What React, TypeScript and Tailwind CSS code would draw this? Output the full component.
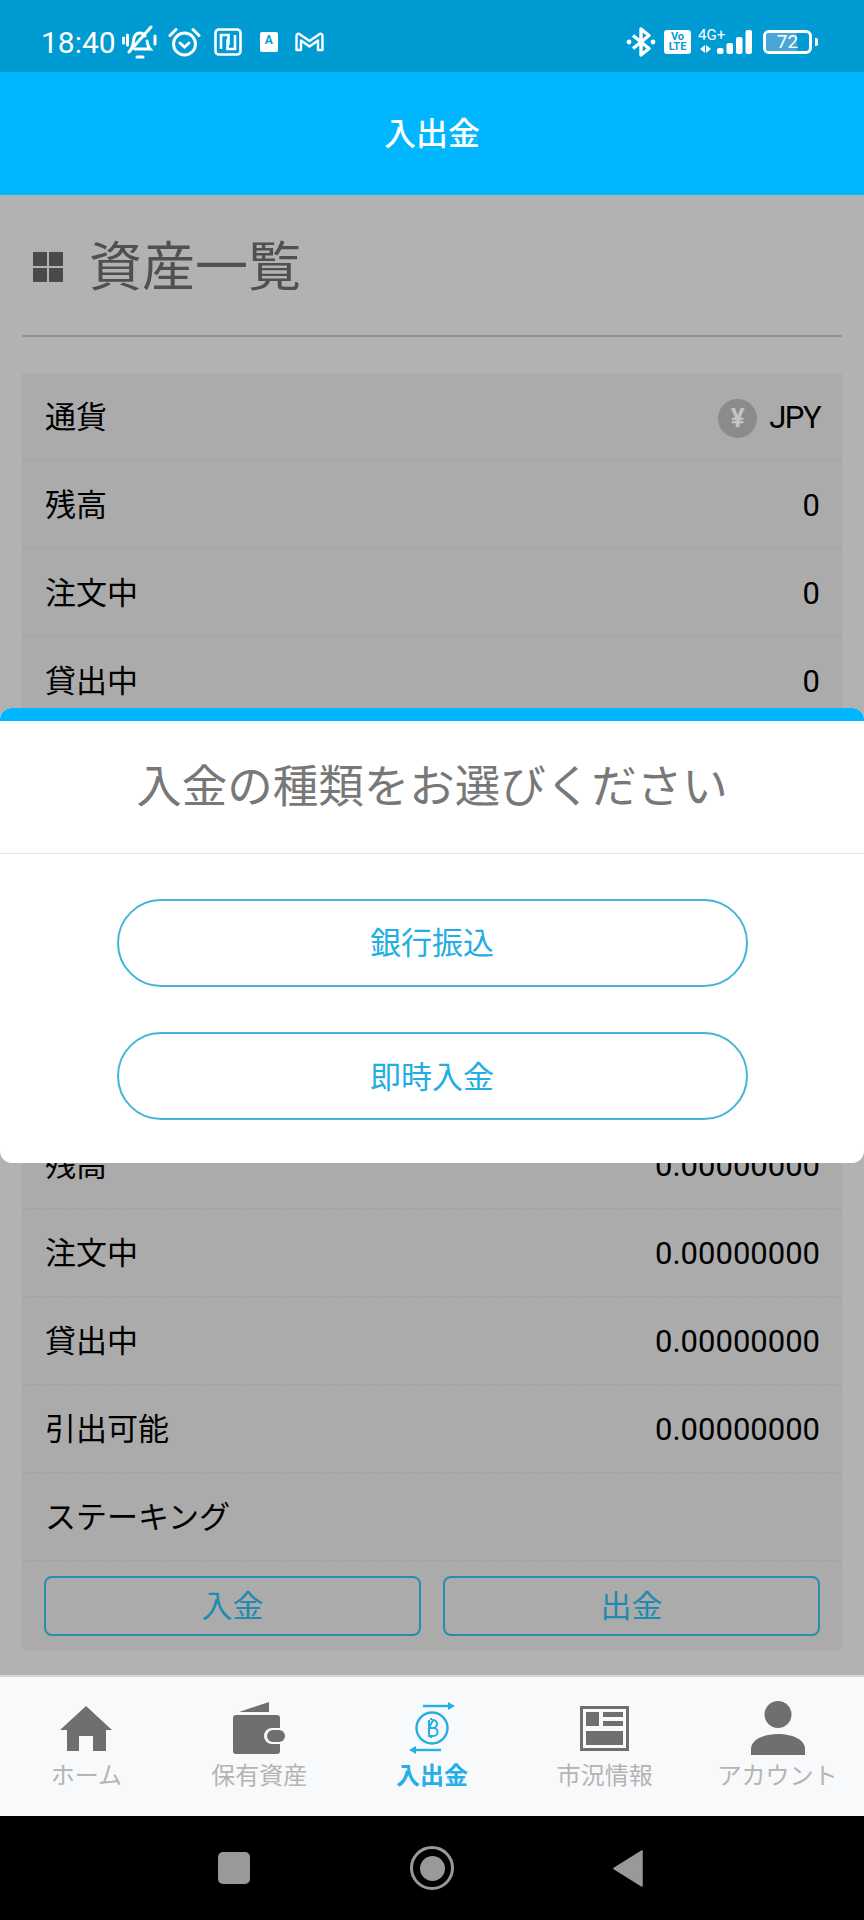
import React from 'react';

const FONT = '"Roboto", "Noto Sans CJK JP", sans-serif';

type RowProps = { label: string; value?: React.ReactNode };

const Row: React.FC<RowProps> = ({ label, value }) => (
  <div className="h-[88px] flex items-center justify-between pt-[3px] pl-[23px] pr-[22px] border-b border-dashed border-[#a0a0a0] text-[31px] text-black">
    <span>{label}</span>
    <span>{value}</span>
  </div>
);

const YenBadge = () => (
  <span className="flex items-center gap-[12px]">
    <span className="w-[39px] h-[39px] rounded-full bg-[#8b8b8b] flex items-center justify-center text-[26px] font-bold text-[#c4c4c4]">¥</span>
    <span className="tracking-[-1.500px]">JPY</span>
  </span>
);

const StatusIcons = () => (
  <div className="flex items-center">
    {/* muted bell */}
    <svg width="35" height="34" viewBox="0 0 35 34" fill="none" stroke="white" strokeWidth="3" strokeLinecap="round" className="ml-[6px]">
      <path d="M9 24c2-2 2-5 2.500-8 .5-5 3-8 6.500-8 2 0 4 1 5 3M25 16c.5 3 1 6 3 8H13" />
      <path d="M7 27 29 2" />
      <path d="M15 32h6" />
      <path d="M1.500 13v5M5.500 10v10M33 11v8" />
    </svg>
    <svg width="33" height="30" viewBox="0 0 33 30" fill="none" stroke="white" strokeWidth="3" strokeLinecap="round" className="ml-[11px]">
      <circle cx="16.500" cy="17" r="11" />
      <path d="m12 16 4.500 4 4.500-4" />
      <path d="M2 8.500 8 2.500M31 8.500l-6-6" />
    </svg>
    <svg width="28" height="28" viewBox="0 0 28 28" fill="none" stroke="white" strokeWidth="2.600" className="ml-[13px]">
      <rect x="1.500" y="1.500" width="25" height="25" rx="3.500" />
      <path d="M7 21V7h7.500v10M21 7v14h-7.500V11" />
    </svg>
    <span className="ml-[18px] w-[18px] h-[20px] rounded-[2px] bg-white text-[#0a9bd2] text-[12px] font-bold leading-[17px] text-center">A</span>
    <svg width="29" height="20" viewBox="0 0 29 20" fill="none" stroke="white" strokeWidth="2.400" strokeLinejoin="round" className="ml-[17px]">
      <path d="M1.500 18V4c0-2 2-3 3.500-1.500L14.500 9 24 2.500C25.500 1 27.500 2 27.500 4v14h-4.500V8.500l-8.500 6-8.500-6V18z" />
    </svg>
  </div>
);

const SystemTray = () => (
  <div className="flex items-center">
    <svg width="30" height="32" viewBox="0 0 30 32" fill="none" stroke="white" strokeWidth="3.400" strokeLinejoin="round">
      <path d="M7 9.500 23 22.500 15 29V3l8 6.500L7 22.500" />
      <circle cx="3" cy="16" r="2.400" fill="white" stroke="none" />
      <circle cx="27" cy="16" r="2.400" fill="white" stroke="none" />
    </svg>
    <span className="ml-[8px] w-[27px] h-[24px] rounded-[3px] bg-white text-[#0a9bd2] text-[11px] font-bold leading-[10px] flex flex-col items-center justify-center">
      <span>Vo</span>
      <span>LTE</span>
    </span>
    <div className="ml-[7px] w-[54px] h-[25px] relative">
      <span className="absolute left-0 -top-[2px] text-[15px] leading-[14px] text-white">4G+</span>
      <svg width="54" height="25" viewBox="0 0 54 25" fill="white" className="absolute left-0 top-0">
        <path d="M2 19l5-4v8zM8 15l5 4-5 4z" />
        <rect x="19" y="18" width="6.500" height="6" rx="2" />
        <rect x="28.500" y="13" width="6.500" height="11" rx="2" />
        <rect x="38" y="7" width="6.500" height="17" rx="2" />
        <rect x="47.500" y="0" width="6.500" height="24" rx="2" />
      </svg>
    </div>
    <div className="ml-[11px] w-[49px] h-[24px] rounded-[6px] border-[3px] border-white relative overflow-hidden">
      <div className="absolute left-0 top-0 bottom-0 w-[31px] bg-[#4aa6d6]" />
      <span className="absolute inset-0 text-center text-[19px] leading-[18px] text-white">72</span>
    </div>
    <div className="ml-[3px] w-[3px] h-[8px] rounded-r-[2px] bg-white" />
  </div>
);

const NavItem: React.FC<{ label: string; active?: boolean; icon: React.ReactNode }> = ({ label, active, icon }) => (
  <div className="flex-1 flex flex-col items-center">
    <div className="h-[56px] flex items-center justify-center">{icon}</div>
    <span className={`mt-[4px] text-[24px] leading-[32px] whitespace-nowrap ${active ? 'text-[#25afe5] font-bold' : 'text-[#b4b4b4]'}`}>{label}</span>
  </div>
);

export default function App() {
  return (
    <div className="w-[864px] h-[1920px] flex flex-col overflow-hidden bg-black" style={{ fontFamily: FONT }}>
      <div className="h-[72px] shrink-0 flex items-center justify-between pt-[12px] pl-[41px] pr-[46px] bg-[#009bd3] text-white">
        <div className="flex items-center">
          <span className="text-[30px]">18:40</span>
          <StatusIcons />
        </div>
        <SystemTray />
      </div>
      <header className="h-[123px] shrink-0 flex items-center justify-center bg-[#00b7ff] text-white text-[32px] font-medium">
        入出金
      </header>

      <main className="relative h-[1480px] shrink-0 overflow-hidden bg-[#b2b2b2]">
        <div className="h-[142px] mx-[22px] border-b-2 border-[#929292] flex items-center pt-[4px]">
          <div className="ml-[11px] w-[30px] h-[30px] grid grid-cols-2 gap-[2px]">
            <span className="bg-[#4a4a4a]" />
            <span className="bg-[#4a4a4a]" />
            <span className="bg-[#4a4a4a]" />
            <span className="bg-[#4a4a4a]" />
          </div>
          <h1 className="ml-[26px] mt-[4px] text-[53px] text-[#505050]">資産一覧</h1>
        </div>

        <div className="mx-[22px] mt-[36px] bg-[#ababab]">
          <Row label="通貨" value={<YenBadge />} />
          <Row label="残高" value="0" />
          <Row label="注文中" value="0" />
          <Row label="貸出中" value="0" />
        </div>
        {/* the rest of the first card and the head of the second are behind the sheet */}
        <div className="mx-[22px] mt-[396px] bg-[#ababab]">
          <Row label="残高" value="0.00000000" />
          <Row label="注文中" value="0.00000000" />
          <Row label="貸出中" value="0.00000000" />
          <Row label="引出可能" value="0.00000000" />
          <Row label="ステーキング" />
          <div className="h-[89px] flex gap-[22px] px-[22px] pt-[15px] pb-[14px]">
            <button className="flex-1 pt-[2px] rounded-[8px] border-2 border-[#2a8db0] text-[31px] text-[#1f8bb0]">入金</button>
            <button className="flex-1 pt-[2px] rounded-[8px] border-2 border-[#2a8db0] text-[31px] text-[#1f8bb0]">出金</button>
          </div>
        </div>

        {/* deposit type sheet */}
        <div className="absolute left-0 right-0 top-[513px] h-[455px] rounded-[12px] overflow-hidden bg-white">
          <div className="h-[13px] bg-[#00b7ff]" />
          <div className="h-[133px] border-b border-[#e5e5e5] flex items-center justify-center pt-[2px] text-[45.500px] text-[#787878]">
            入金の種類をお選びください
          </div>
          <div className="flex flex-col items-center gap-[45px] pt-[45px]">
            <button className="w-[631px] h-[88px] pt-[3px] rounded-full border-2 border-[#44b5d8] text-[31px] text-[#22aee2]">銀行振込</button>
            <button className="w-[631px] h-[88px] pt-[5px] rounded-full border-2 border-[#44b5d8] text-[31px] text-[#22aee2]">即時入金</button>
          </div>
        </div>
      </main>

      <nav className="h-[141px] shrink-0 pt-[23px] bg-[#f8f9fb] border-t-2 border-[#d8d8d8] flex">
        <NavItem
          label="ホーム"
          icon={
            <svg width="52" height="45" viewBox="0 0 52 45" fill="#6f6f6f">
              <path d="M26 0 52 24h-6v21H33V30H19v15H7V24H0z" />
            </svg>
          }
        />
        <NavItem
          label="保有資産"
          icon={
            <svg width="54" height="52" viewBox="0 0 54 52" fill="#6f6f6f">
              <path d="M7 10 37 0v10z" />
              <path d="M4 13h41a3 3 0 0 1 3 3v10H40a8 8 0 0 0 0 16h8v7a3 3 0 0 1-3 3H4a3 3 0 0 1-3-3V16a3 3 0 0 1 3-3z" />
              <rect x="35" y="28" width="18" height="12" rx="6" />
            </svg>
          }
        />
        <NavItem
          label="入出金"
          active
          icon={
            <svg width="46" height="52" viewBox="0 0 46 52" fill="none" stroke="#25afe5" strokeWidth="2.400">
              <path d="M14 4h26" />
              <path d="m39 0 7 4-7 4z" fill="#25afe5" stroke="none" />
              <path d="M6 48h26" />
              <path d="m7 44-7 4 7 4z" fill="#25afe5" stroke="none" />
              <circle cx="23" cy="26" r="15.500" />
              <path d="M20 18v16h4.500a4 4 0 0 0 0-8H20m0 0h4a4 4 0 0 0 0-8zM22 16v2M22 34v2" strokeWidth="2" />
            </svg>
          }
        />
        <NavItem
          label="市況情報"
          icon={
            <svg width="49" height="45" viewBox="0 0 49 45" fill="#6f6f6f">
              <path fillRule="evenodd" d="M0 0h49v45H0zM3 3v39h43V3z" />
              <rect x="6" y="6" width="13" height="14" />
              <rect x="23" y="6" width="20" height="5" />
              <rect x="23" y="15" width="20" height="5" />
              <rect x="6" y="25" width="37" height="14" />
            </svg>
          }
        />
        <NavItem
          label="アカウント"
          icon={
            <svg width="54" height="54" viewBox="0 0 54 54" fill="#6f6f6f">
              <circle cx="27" cy="13.500" r="13.500" />
              <path d="M0 54v-6c0-10 14-15 27-15s27 5 27 15v6z" />
            </svg>
          }
        />
      </nav>

      <div className="flex-1 flex items-center justify-center pr-[3px]">
        <div className="w-[32px] h-[32px] rounded-[5px] bg-[#999999]" />
        <div className="ml-[160px] w-[44px] h-[44px] rounded-full border-[3px] border-[#999999] flex items-center justify-center">
          <div className="w-[25px] h-[25px] rounded-full bg-[#999999]" />
        </div>
        <svg width="30" height="37" viewBox="0 0 30 37" fill="#999999" className="ml-[159px]">
          <path d="M29 1v35L1 18.500z" strokeLinejoin="round" stroke="#999999" strokeWidth="1.500" />
        </svg>
      </div>
    </div>
  );
}
